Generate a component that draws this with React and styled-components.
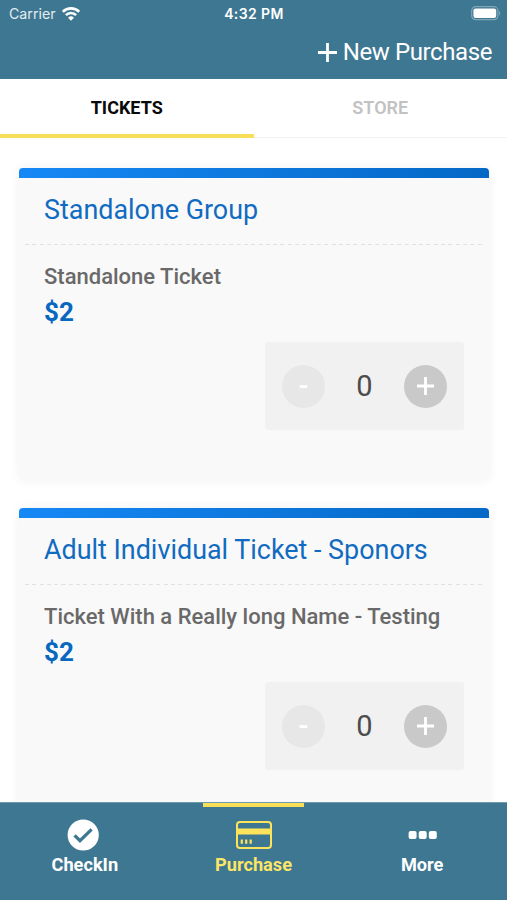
import { useState } from "react";
import styled, { createGlobalStyle } from "styled-components";

const tickets = [
  { id: 1, group: "Standalone Group", name: "Standalone Ticket", price: 2 },
  {
    id: 2,
    group: "Adult Individual Ticket - Sponors",
    name: "Ticket With a Really long Name - Testing",
    price: 2,
  },
];

function StatusBar() {
  return (
    <Status>
      <Carrier>
        <span>Carrier</span>
        <svg width="18" height="14" viewBox="0 0 18 14" fill="none" stroke="#fff">
          <path d="M0.8 4.9a11.5 11.5 0 0 1 16.4 0" strokeWidth="2.7" />
          <path d="M3.9 8.1a7.2 7.2 0 0 1 10.2 0" strokeWidth="2.6" />
          <path d="M9 13.7 6.1 10.8a4.1 4.1 0 0 1 5.8 0z" fill="#fff" stroke="none" />
        </svg>
      </Carrier>
      <Clock>4:32 PM</Clock>
      <Battery>
        <svg width="30" height="15" viewBox="0 0 30 15">
          <rect x="0.7" y="0.7" width="26.2" height="13" rx="4" fill="none" stroke="#7fa5b7" strokeWidth="1.2" />
          <rect x="2.4" y="2.4" width="22.8" height="9.6" rx="2.2" fill="#fff" />
          <path d="M28 5v4.6c1.6-.6 1.6-4 0-4.6z" fill="#7fa5b7" />
        </svg>
      </Battery>
    </Status>
  );
}

function TicketCard({ ticket }) {
  const [count, setCount] = useState(0);

  return (
    <Card>
      <CardBar />
      <CardTitle>{ticket.group}</CardTitle>
      <Divider />
      <CardBody>
        <TicketName>{ticket.name}</TicketName>
        <Price>${ticket.price}</Price>
        <Counter>
          <CountBtn disabled={count === 0} onClick={() => setCount(count - 1)}>
            -
          </CountBtn>
          <Count>{count}</Count>
          <CountBtn onClick={() => setCount(count + 1)}>
            <svg width="18" height="18" viewBox="0 0 18 18" stroke="#fff" strokeWidth="2.8">
              <path d="M8.5 0v18M0 9h17" />
            </svg>
          </CountBtn>
        </Counter>
      </CardBody>
    </Card>
  );
}

function App() {
  const [tab, setTab] = useState("tickets");

  return (
    <Screen>
      <GlobalStyle />
      <Header>
        <StatusBar />
        <NewPurchase>
          <svg width="19" height="19" viewBox="0 0 19 19" stroke="#fff" strokeWidth="2.8">
            <path d="M9.5 0v19M0 9.5h19" />
          </svg>
          <span>New Purchase</span>
        </NewPurchase>
      </Header>
      <Tabs>
        <Tab $active={tab === "tickets"} onClick={() => setTab("tickets")}>
          TICKETS
        </Tab>
        <Tab $active={tab === "store"} onClick={() => setTab("store")}>
          STORE
        </Tab>
      </Tabs>
      <List>
        {tickets.map((ticket) => (
          <TicketCard key={ticket.id} ticket={ticket} />
        ))}
      </List>
      <BottomNav>
        <NavItem>
          <NavIcon>
            <svg width="36" height="32" viewBox="0 0 36 32">
              <circle cx="16.2" cy="16" r="15.6" fill="#fff" />
              <path d="m7.6 16.3 5.4 5.4L24.6 10.3" fill="none" stroke="#3e7791" strokeWidth="3.2" />
            </svg>
          </NavIcon>
          <span>CheckIn</span>
        </NavItem>
        <NavItem $active>
          <NavIcon>
            <svg width="38" height="28" viewBox="-2 0 38 28">
              <rect x="1" y="1" width="34" height="26" rx="3" fill="none" stroke="#fde35b" strokeWidth="2" />
              <path d="M1 7.5h34v6H1z" fill="#fde35b" />
              <path d="M5.8 18.5v4.2M10.2 18.5v4.2M14.7 18.5v4.2" stroke="#fde35b" strokeWidth="2.2" />
            </svg>
          </NavIcon>
          <span>Purchase</span>
        </NavItem>
        <NavItem>
          <NavIcon>
            <svg width="30" height="10" viewBox="0 0 30 10" fill="#fff">
              <rect x="1.6" y="1" width="8" height="8" rx="2" />
              <rect x="11.7" y="1" width="8" height="8" rx="2" />
              <rect x="21.8" y="1" width="8" height="8" rx="2" />
            </svg>
          </NavIcon>
          <span>More</span>
        </NavItem>
      </BottomNav>
    </Screen>
  );
}

const GlobalStyle = createGlobalStyle`
  * {
    box-sizing: border-box;
  }
  body {
    margin: 0;
    background-color: #fff;
    font-family: Roboto, "Liberation Sans", sans-serif;
  }
  button {
    padding: 0;
    border: none;
    background: none;
    font-family: inherit;
    cursor: pointer;
  }
  svg {
    display: block;
  }
`;

const Screen = styled.div`
  display: flex;
  flex-direction: column;
  height: 900px;
  overflow: hidden;
`;

const Header = styled.header`
  flex: none;
  height: 79px;
  background-color: #3e7791;
  color: #fff;
`;

const Status = styled.div`
  display: grid;
  grid-template-columns: 1fr auto 1fr;
  align-items: center;
  height: 27px;
  padding: 0 6px 0 9px;
  font-family: Inter, "Liberation Sans", sans-serif;
`;

const Carrier = styled.div`
  display: flex;
  align-items: center;
  gap: 6px;
  font-size: 14.2px;
  color: #e3edf2;
`;

const Clock = styled.span`
  margin-left: -2px;
  font-size: 14px;
  font-weight: 600;
  letter-spacing: 0.4px;
`;

const Battery = styled.div`
  display: flex;
  justify-content: flex-end;
`;

const NewPurchase = styled.button`
  display: flex;
  align-items: center;
  gap: 6px;
  height: 50px;
  margin-left: auto;
  padding-right: 15px;
  font-size: 24px;
  letter-spacing: -0.4px;
  color: #fff;
`;

const Tabs = styled.div`
  flex: none;
  display: flex;
  height: 59px;
`;

const Tab = styled.button`
  flex: 1;
  padding-top: 2px;
  padding-bottom: ${(props) => (props.$active ? "0" : "3px")};
  border-bottom: ${(props) =>
    props.$active ? "4px solid #f9df58" : "1px solid #f1f1f1"};
  font-size: 18px;
  font-weight: ${(props) => (props.$active ? 700 : 600)};
  color: ${(props) => (props.$active ? "#0a0a0a" : "#c2c2c2")};
`;

const List = styled.main`
  flex: 1;
  min-height: 0;
  overflow: hidden;
  padding: 30px 18px 0 19px;
`;

const Card = styled.section`
  height: 312px;
  margin-bottom: 28.4px;
  border-radius: 4px;
  background-color: #f9f9f9;
  box-shadow: 0 0 12px rgba(0, 0, 0, 0.06);
`;

const CardBar = styled.div`
  height: 10px;
  border-radius: 4px 4px 0 0;
  background: linear-gradient(90deg, #1688f5, #0468c6);
`;

const CardTitle = styled.h2`
  height: 66px;
  margin: 0;
  padding-left: 25px;
  font-size: 26.9px;
  font-weight: 400;
  line-height: 64px;
  color: #116bc0;
`;

const Divider = styled.div`
  height: 1px;
  margin: 0 6px 1px;
  background: repeating-linear-gradient(90deg, #e2e2e2 0 4px, transparent 4px 7.3px);
`;

const CardBody = styled.div`
  display: flex;
  flex-direction: column;
  padding: 16px 25px 0;
`;

const TicketName = styled.span`
  font-size: 22px;
  font-weight: 500;
  line-height: 30px;
  color: #696969;
`;

const Price = styled.span`
  font-size: 26px;
  font-weight: 700;
  line-height: 40px;
  color: #0868c0;
`;

const Counter = styled.div`
  display: flex;
  align-items: center;
  justify-content: space-between;
  align-self: flex-end;
  width: 199px;
  height: 88px;
  margin-top: 10px;
  padding: 0 17px;
  border-radius: 3px;
  background-color: #f1f1f1;
`;

const CountBtn = styled.button`
  display: flex;
  align-items: center;
  justify-content: center;
  width: 43px;
  height: 43px;
  border-radius: 50%;
  background-color: ${(props) => (props.disabled ? "#e7e7e7" : "#c9c9c9")};
  font-size: 29px;
  font-weight: 500;
  color: #fff;
`;

const Count = styled.span`
  font-size: 29px;
  color: #4c4c4c;
`;

const BottomNav = styled.nav`
  flex: none;
  display: flex;
  justify-content: space-around;
  height: 98px;
  padding: 0 0.5px;
  border-top: 1px solid #6f99ac;
  background-color: #3e7791;
`;

const NavItem = styled.button`
  display: flex;
  flex-direction: column;
  align-items: center;
  width: 101px;
  padding-top: 10px;
  border-top: 4px solid ${(props) => (props.$active ? "#f9df58" : "transparent")};
  font-size: 18.2px;
  font-weight: 700;
  color: ${(props) => (props.$active ? "#fbe566" : "#fff")};
`;

const NavIcon = styled.div`
  display: flex;
  align-items: center;
  height: 35px;
  margin-bottom: 2px;
`;

export default App;
